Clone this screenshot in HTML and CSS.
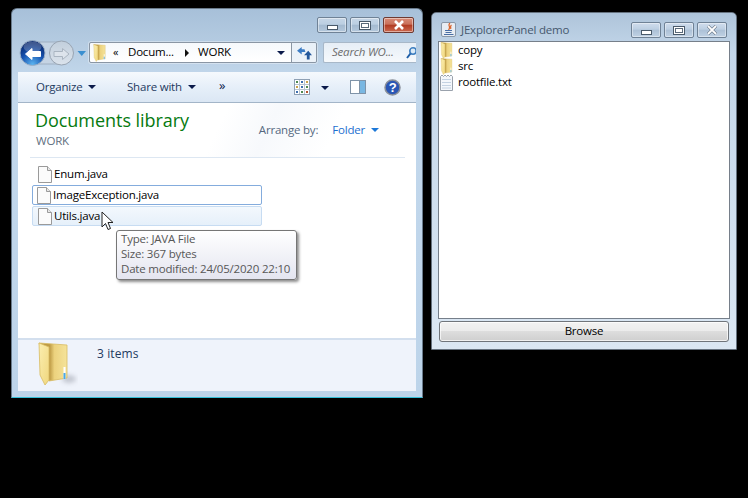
FILE: index.html
```html
<!DOCTYPE html>
<html lang="en">
<head>
<meta charset="utf-8">
<title>Explorer</title>
<link rel="stylesheet" href="styles.css">
</head>
<body>
<svg class="defs" width="0" height="0" aria-hidden="true">
  <defs>
    <linearGradient id="fold" x1="0" y1="0" x2="1" y2="1"><stop offset="0" stop-color="#fbeeb0"/><stop offset="1" stop-color="#f0d77e"/></linearGradient>
    <linearGradient id="foldb" x1="0" y1="0" x2="1" y2="0"><stop offset="0" stop-color="#b8923c"/><stop offset=".38" stop-color="#bf9c46"/><stop offset=".55" stop-color="#ecd27e"/><stop offset="1" stop-color="#f5e39a"/></linearGradient>
    <radialGradient id="back" cx=".5" cy=".95" r=".85"><stop offset="0" stop-color="#5ab4f0"/><stop offset=".55" stop-color="#1652b0"/><stop offset="1" stop-color="#0a2a70"/></radialGradient>
    <linearGradient id="fwd" x1="0" y1="0" x2="0" y2="1"><stop offset="0" stop-color="#c2cfdc"/><stop offset="1" stop-color="#dbe3ec"/></linearGradient>
    <symbol id="folder" viewBox="0 0 30 44"><path d="M1 1 L29 3 V36 L11 39Z" fill="url(#foldb)" stroke="#d8bb62" stroke-width=".8"/><path d="M1 1 L11 5 V38 L7 43 L2 33Z" fill="url(#fold)" stroke="#d8bb62" stroke-width=".8"/><rect x="25.500" y="25" width="2" height="12" fill="#fff"/><rect x="25.500" y="31" width="2" height="6" fill="#4aa8e8"/></symbol>
    <symbol id="file" viewBox="0 0 14 17"><path d="M.5.5H9.500L13.500 4.500V16.500H.5Z" fill="#fbfbfb" stroke="#9a9a9a"/><path d="M9.500.5V4.500H13.500" fill="#e8e8e8" stroke="#9a9a9a"/></symbol>
  </defs>
</svg>

<main class="explorer">
  <div class="ex-title">
    <div class="ctl ctl-min"><span class="glyph-min"></span></div>
    <div class="ctl ctl-max"><span class="glyph-max"></span></div>
    <div class="ctl ctl-close"><svg width="14" height="10" viewBox="0 0 14 10"><path d="M3 1 L11 9 M11 1 L3 9" stroke="#fff" stroke-width="2.600"/></svg></div>
  </div>
  <div class="ex-nav">
    <div class="navbtns">
      <svg width="68" height="28" viewBox="0 0 68 28">
        <rect x="14" y="3" width="30" height="22" fill="#c5d4e4" stroke="#9fb0c2"/>
        <circle cx="13.500" cy="14" r="12.500" fill="url(#back)" stroke="#9cb0c6"/>
        <ellipse cx="13.500" cy="8" rx="9" ry="5.500" fill="#fff" opacity=".22"/>
        <path d="M6.500 15 L13 9.500 V12.500 H21.500 V17.500 H13 V20.500Z" fill="#fff" stroke="#fff" stroke-linejoin="round"/>
        <circle cx="42.500" cy="14" r="12" fill="url(#fwd)" stroke="#98a4b2"/>
        <path d="M50 15 L43.500 9.500 V12.500 H35 V17.500 H43.500 V20.500Z" fill="#dde4ec" stroke="#aab5c1" stroke-linejoin="round"/>
        <path d="M58.500 12 H67 L62.750 17Z" fill="#3a8fd0"/>
      </svg>
    </div>
    <div class="address">
      <svg class="addr-folder" width="13" height="18"><use href="#folder"/></svg>
      <span class="addr-chev">«</span>
      <span class="addr-a">Docum...</span>
      <span class="arrow-r"></span>
      <span class="addr-b">WORK</span>
      <span class="arrow-d"></span>
      <span class="refresh">
        <svg width="15" height="14" viewBox="0 0 16 15"><path d="M0 5 L5 1 V3.500 H8 L9 6.500 H5 V9Z" fill="#3c7cc4"/><path d="M12 5 L16 10 H13.500 V14.500 H10.500 V10 H7.500Z" fill="#24589c"/></svg>
      </span>
    </div>
    <div class="search">
      <span class="search-text">Search WO...</span>
      <svg width="10" height="13" viewBox="0 0 10 13"><circle cx="7" cy="5" r="3.200" fill="#dbeaf7" stroke="#3f7fc0" stroke-width="1.600"/><path d="M4.500 7.500 L1 12" stroke="#1f5fa8" stroke-width="2"/></svg>
    </div>
  </div>
  <div class="ex-body">
    <div class="toolbar">
      <span class="tb-item tb-org">Organize<i class="arrow-d dark"></i></span>
      <span class="tb-item tb-share">Share with<i class="arrow-d dark"></i></span>
      <span class="tb-more">»</span>
      <span class="tb-spacer"></span>
      <svg class="tb-views" width="16" height="16" viewBox="0 0 16 16"><rect x=".5" y=".5" width="15" height="15" fill="#fff" stroke="#8ea0b4"/><path d="M5.500 1V15M10.500 1V15M1 5.500H15M1 10.500H15" stroke="#b8c4d0"/><g fill="#4f8a52"><rect x="2" y="2" width="2" height="2"/><rect x="7" y="7" width="2" height="2" fill="#3d6fb0"/><rect x="12" y="2" width="2" height="2" fill="#c9a24a"/><rect x="7" y="2" width="2" height="2" fill="#3d6fb0"/><rect x="2" y="7" width="2" height="2" fill="#c9a24a"/><rect x="12" y="7" width="2" height="2"/><rect x="2" y="12" width="2" height="2" fill="#3d6fb0"/><rect x="7" y="12" width="2" height="2"/><rect x="12" y="12" width="2" height="2" fill="#b5542c"/></g></svg>
      <i class="arrow-d dark tb-views-arrow"></i>
      <svg class="tb-pane" width="16" height="14" viewBox="0 0 16 14"><rect x=".5" y=".5" width="15" height="13" fill="#fff" stroke="#7f93a8"/><rect x="10" y="1" width="5" height="12" fill="#79b7e2"/><path d="M9.500 1V13" stroke="#7f93a8"/></svg>
      <svg class="tb-help" width="17" height="17" viewBox="0 0 17 17"><circle cx="8.500" cy="8.500" r="7.500" fill="#2a56b4" stroke="#8a8f98" stroke-width="1.500"/><text class="help-q" x="8.500" y="12.500" text-anchor="middle">?</text></svg>
    </div>
    <div class="content">
      <div class="lib-head">
        <div class="lib-titles">
          <div class="lib-title">Documents library</div>
          <div class="lib-sub">WORK</div>
        </div>
        <div class="arrange"><span class="arr-label">Arrange by:</span><span class="arr-val">Folder</span><i class="arrow-d blue"></i></div>
      </div>
      <div class="divider"></div>
      <div class="files">
        <div class="file-row"><svg class="file-icon" width="14" height="17"><use href="#file"/></svg><span>Enum.java</span></div>
        <div class="file-row focused"><svg class="file-icon" width="14" height="17"><use href="#file"/></svg><span>ImageException.java</span></div>
        <div class="file-row hovered"><svg class="file-icon" width="14" height="17"><use href="#file"/></svg><span>Utils.java</span></div>
      </div>
    </div>
    <div class="footer">
      <svg class="footer-folder" width="40" height="46" viewBox="0 0 40 46"><ellipse class="folder-shadow" cx="31" cy="37" rx="7" ry="4"/><use href="#folder" x="0" y="0" width="30" height="44"/></svg>
      <span class="footer-text">3 items</span>
    </div>
  </div>
  <div class="tooltip">
    <div>Type: JAVA File</div>
    <div>Size: 367 bytes</div>
    <div>Date modified: 24/05/2020 22:10</div>
  </div>
  <svg class="cursor" width="14" height="21" viewBox="0 0 14 21"><path d="M1 1 V16 L4.500 12.500 L7 18.500 L9.500 17.500 L7 11.500 H12Z" fill="#fff" stroke="#222" stroke-width="1"/></svg>
</main>

<section class="jframe">
  <div class="j-title">
    <span class="j-icon"><svg width="12" height="13" viewBox="0 0 12 13"><path d="M7 0 C4 2.500 8.500 3.500 5.500 7 M8.500 2 C6.500 3.500 8.500 4.500 7.500 6" stroke="#d9632a" fill="none" stroke-width="1.200"/><path d="M2 7.500 H9 M2.500 9.500 H8.500 M1 11.500 H10.500" stroke="#4a6fa5"/></svg></span>
    <span class="j-text">JExplorerPanel demo</span>
    <span class="j-spacer"></span>
    <div class="jctl"><span class="glyph-min"></span></div>
    <div class="jctl"><span class="glyph-max"></span></div>
    <div class="jctl"><svg width="12" height="10" viewBox="0 0 12 10"><path d="M2 1 L10 9 M10 1 L2 9" stroke="#5a6878" stroke-width="3"/><path d="M2 1 L10 9 M10 1 L2 9" stroke="#fff" stroke-width="1.800"/></svg></div>
  </div>
  <div class="j-list">
    <div class="j-row"><svg width="13" height="17"><use href="#folder"/></svg><span>copy</span></div>
    <div class="j-row"><svg width="13" height="17"><use href="#folder"/></svg><span>src</span></div>
    <div class="j-row"><svg width="13" height="17" viewBox="0 0 13 17"><path d="M.5 2.500 L2 1 L3.500 2.500 L5 1 L6.500 2.500 L8 1 L9.500 2.500 L11 1 L12.500 2.500 V16.500 H.5Z" fill="#f4f7fb" stroke="#9aa2ac"/><path d="M2 5.500H11M2 8.500H11M2 11.500H11M2 14H11" stroke="#c4d2e2"/></svg><span>rootfile.txt</span></div>
  </div>
  <button class="j-browse" type="button">Browse</button>
</section>
</body>
</html>
```
FILE: styles.css
```css
* { box-sizing: border-box; }
html, body { margin: 0; padding: 0; background: #000; width: 748px; height: 498px; overflow: hidden; font-family: "Open Sans", "Noto Sans", sans-serif; font-size: 11.5px; letter-spacing: -.2px; }
.defs { position: absolute; }

.explorer { position: absolute; left: 11px; top: 8px; width: 412px; height: 390px; background: linear-gradient(#a7c0d9 0, #b9cfe4 45px, #c3d8ec 70px, #bdd4ea 100%); border: 1px solid #6a7b8c; border-bottom-color: #35c0d8; border-radius: 6px 6px 0 0; display: flex; flex-direction: column; padding: 0 6px 6px 6px; }
.ex-title { height: 32px; display: flex; justify-content: flex-end; gap: 3px; padding: 8px 2px 0 0; flex: none; }
.ctl { width: 30px; height: 16px; border: 1px solid #6f8296; border-radius: 2px; background: linear-gradient(#c6d6e6 0, #bccfe2 45%, #a4bad0 50%, #b4c8dc 100%); display: flex; align-items: center; justify-content: center; box-shadow: inset 0 0 0 1px rgba(255,255,255,.45); }
.ctl-close { width: 31px; background: linear-gradient(#d98c78 0, #c9705a 45%, #b03a22 50%, #cc6a50 100%); border-color: #6e3a32; }
.glyph-min { width: 11px; height: 5px; border: 1px solid #4a5a6a; background: #fff; margin-top: 5px; }
.glyph-max { width: 12px; height: 9px; border: 1px solid #4a5a6a; background: #fff; box-shadow: inset 0 0 0 1px #fff, inset 0 0 0 2px #5a6a7a; }

.ex-nav { height: 31px; flex: none; display: flex; align-items: flex-start; position: relative; padding-top: 1px; }
.navbtns { width: 70px; height: 28px; flex: none; margin-top: -3px; margin-left: 1px; }
.address { width: 228px; height: 21px; flex: none; display: flex; align-items: center; background: linear-gradient(#f6f9fc, #fff); border: 1px solid #8a96a4; border-radius: 2px; box-shadow: 0 0 0 1px rgba(255,255,255,.35); padding-left: 3px; color: #000; }
.addr-folder { flex: none; }
.addr-chev { margin-left: 7px; width: 15px; font-size: 11px; margin-bottom: 2px; }
.addr-a { width: 57px; margin-bottom: 2px; }
.arrow-r { width: 0; height: 0; border-left: 4px solid #111; border-top: 4px solid transparent; border-bottom: 4px solid transparent; margin-right: 9px; flex: none; }
.addr-b { flex: 1; margin-bottom: 2px; }
.arrow-d { display: inline-block; width: 0; height: 0; border-top: 4px solid #0b1a4a; border-left: 4px solid transparent; border-right: 4px solid transparent; margin-right: 6px; flex: none; }
.refresh { width: 25px; height: 100%; border-left: 1px solid #8a96a4; display: flex; align-items: center; justify-content: center; background: rgba(220,232,244,.5); flex: none; }
.search { width: 93px; height: 21px; margin-left: 6px; flex: none; display: flex; align-items: center; justify-content: space-between; background: linear-gradient(#e6eef6, #f6f9fc); border: 1px solid #a8b8c8; border-right: 0; border-radius: 2px 0 0 2px; padding-left: 8px; font-style: italic; color: #6d6d6d; overflow: hidden; }
.search-text { white-space: nowrap; margin-bottom: 2px; }

.ex-body { flex: 1; display: flex; flex-direction: column; min-height: 0; background: #fff; }
.toolbar { height: 31px; flex: none; display: flex; align-items: center; padding-left: 18px; padding-bottom: 2px; color: #1e3a5f; background: linear-gradient(#f5f9fd 0, #e6eff9 50%, #dbe7f4 100%); border-bottom: 1px solid #a3b5c8; }
.tb-item { display: inline-flex; align-items: center; }
.tb-item .arrow-d { margin: 2px 0 0 6px; }
.tb-org { width: 91px; }
.tb-share { width: 92px; }
.tb-more { width: 20px; font-size: 13px; color: #0b1a4a; margin-top: -3px; }
.tb-spacer { flex: 1; }
.tb-views { flex: none; margin-top: 2px; }
.tb-views-arrow { margin: 3px 0 0 11px; }
.tb-pane { margin: 2px 18px 0 21px; flex: none; }
.tb-help { margin: 2px 15px 0 0; flex: none; }
.help-q { font-size: 13px; font-weight: 700; fill: #fff; font-family: "Liberation Sans", sans-serif; }

.content { flex: 1; background: linear-gradient(115deg, #fff 50%, #f7f9fc 62%, #fff 78%) no-repeat; background-size: 100% 54px; min-height: 0; padding: 5px 11px 0 14px; }
.lib-head { display: flex; justify-content: space-between; height: 49px; padding-left: 3px; }
.lib-title { color: #067a10; font-size: 18px; line-height: 24px; letter-spacing: -.05px; }
.lib-sub { color: #5f6f80; line-height: 16px; margin-top: 1px; padding-left: 1px; }
.arrange { display: flex; align-items: center; height: 24px; margin: 9px 26px 0 0; }
.arr-label { color: #55687f; margin-right: 14px; }
.arr-val { color: #1c6fd0; }
.arrange .arrow-d { margin: 1px 0 0 6px; border-top-color: #1c78d8; }
.divider { height: 1px; background: #dde7f2; margin: 0 0 0 -2px; }
.files { padding-top: 6px; display: flex; flex-direction: column; gap: 1px; }
.file-row { width: 230px; height: 20px; display: flex; align-items: center; gap: 2px; padding-left: 5px; color: #000; border: 1px solid transparent; border-radius: 2px; }
.file-row span { margin-bottom: 2px; }
.file-icon { flex: none; }
.focused { border-color: #84acdd; padding-left: 4px; }
.hovered { background: linear-gradient(#f3f8fd, #e6f0fa); border-color: #c7dcf2; }

.footer { height: 53px; flex: none; display: flex; align-items: flex-start; background: #eff3fb; border-top: 2px solid #d3dfee; padding-left: 20px; }
.footer-folder { flex: none; margin-top: 2px; }
.folder-shadow { fill: #c4c8d2; filter: blur(2px); }
.footer-text { margin-left: 19px; margin-top: 5px; color: #1e3a5f; font-size: 12px; letter-spacing: .1px; }

.tooltip { position: absolute; left: 104px; top: 221px; width: 181px; height: 50px; border: 1px solid #767676; border-radius: 3px; background: linear-gradient(#fff, #e4e5f0); color: #575757; padding: 0 0 0 4px; line-height: 15px; box-shadow: 2px 2px 3px rgba(0,0,0,.45); white-space: nowrap; }
.cursor { position: absolute; left: 89px; top: 202px; }

.jframe { position: absolute; left: 431px; top: 12px; width: 306px; height: 338px; background: linear-gradient(#aec4da 0, #c4d7ea 40px, #dbe7f3 100%); border: 1px solid #66727f; border-radius: 5px 5px 0 0; padding: 0 6px 7px 6px; display: flex; flex-direction: column; }
.j-title { height: 28px; flex: none; display: flex; align-items: flex-start; padding: 9px 3px 0 3px; gap: 3px; }
.j-icon { width: 15px; height: 15px; background: #e8edf3; border: 1px solid #8a98a8; border-radius: 2px; display: flex; align-items: center; justify-content: center; flex: none; }
.j-text { color: #46586e; line-height: 16px; margin-left: 2px; }
.j-spacer { flex: 1; }
.jctl { width: 30px; height: 16px; border: 1px solid #6f8296; border-radius: 2px; background: linear-gradient(#d0dded, #bccfe2 45%, #acc0d6 50%, #c0d2e4); display: flex; align-items: center; justify-content: center; flex: none; box-shadow: inset 0 0 0 1px rgba(255,255,255,.4); }
.j-list { flex: 1; min-height: 0; background: #fff; border: 1px solid #767f8a; }
.j-row { height: 16px; display: flex; align-items: center; gap: 5px; padding-left: 1px; color: #000; }
.j-row svg { flex: none; }
.j-row span { margin-bottom: 2px; }
.j-browse { height: 21px; margin: 2px 1px 0 1px; flex: none; font: inherit; letter-spacing: inherit; color: #000; border: 1px solid #70757b; border-radius: 3px; background: linear-gradient(#f2f2f2 0, #ebebeb 48%, #dddddd 50%, #cfcfcf 100%); box-shadow: inset 0 0 0 1px rgba(255,255,255,.7); padding: 0 0 2px; }
```
